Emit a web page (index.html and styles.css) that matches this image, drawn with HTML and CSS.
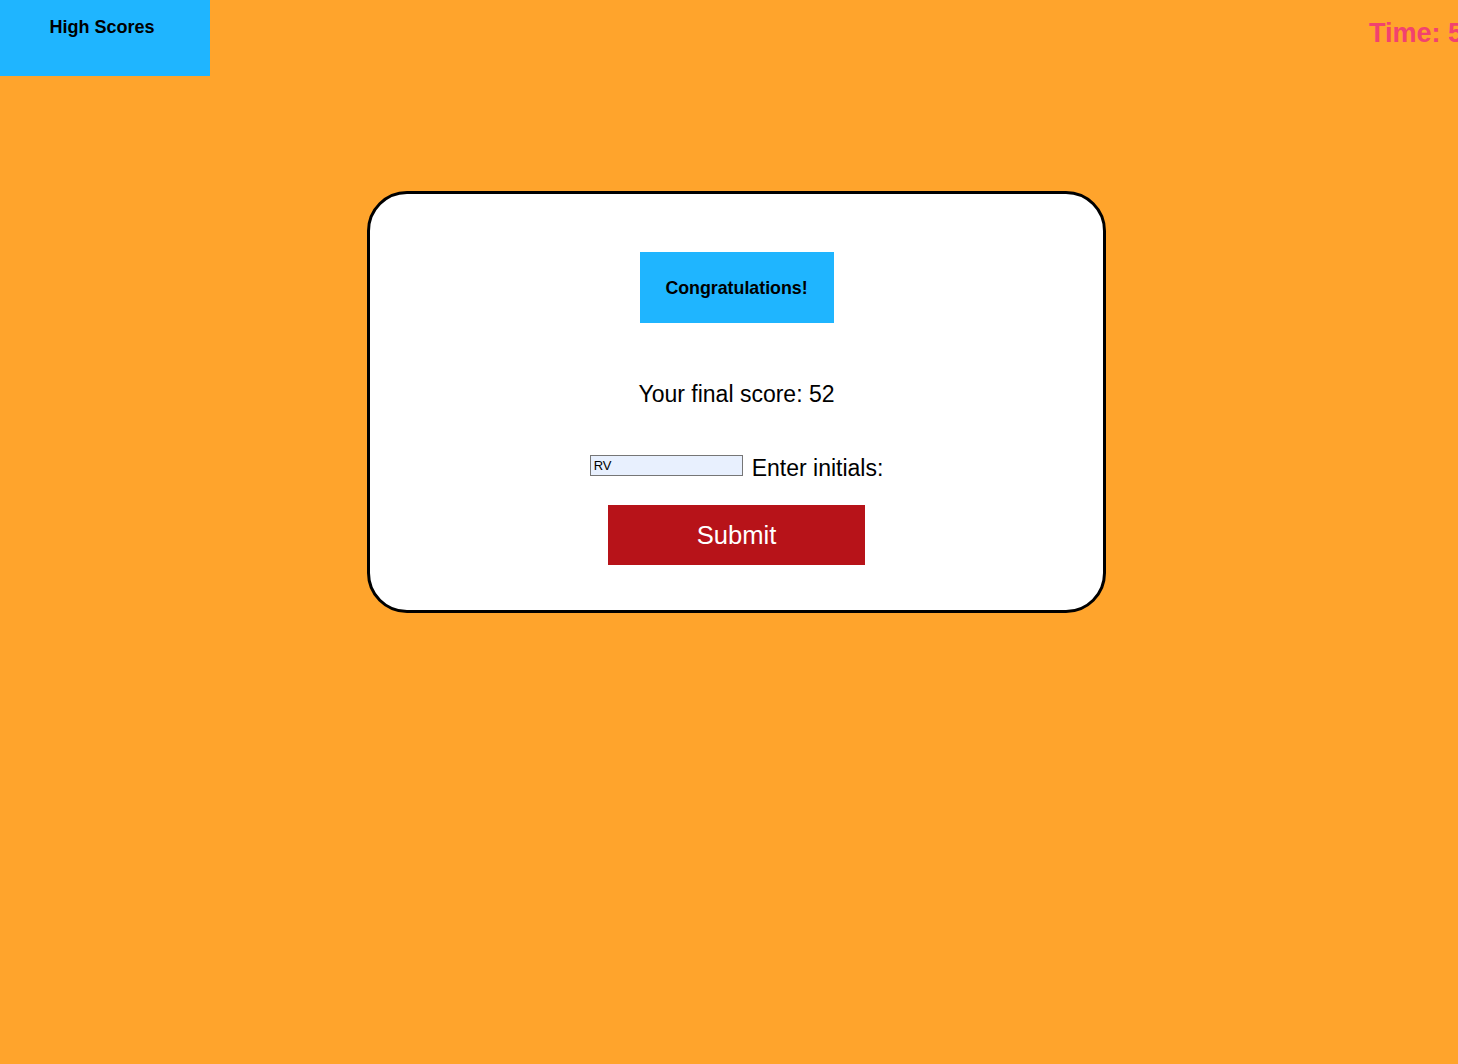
FILE: index.html
```html
<!DOCTYPE html>
<html lang="en">
<head>
<meta charset="utf-8">
<title>Quiz - Final Score</title>
<link rel="stylesheet" href="styles.css">
</head>
<body>
  <header class="topbar">
    <div class="high-scores">High Scores</div>
    <div class="timer">Time: 50</div>
  </header>
  <main class="stage">
    <section class="card">
      <div class="congrats">Congratulations!</div>
      <p class="score">Your final score: 52</p>
      <div class="entry">
        <input class="initials" type="text" value="RV">
        <label class="entry-label">Enter initials:</label>
      </div>
      <button class="submit" type="button">Submit</button>
    </section>
  </main>
</body>
</html>
```

FILE: styles.css
```css
html, body {
  margin: 0;
  padding: 0;
  overflow: hidden;
}

body {
  background: #ffa42c;
  font-family: "Liberation Sans", Arial, Helvetica, sans-serif;
  color: #000;
  width: 1458px;
  height: 1064px;
}

.topbar {
  display: flex;
  justify-content: space-between;
  align-items: flex-start;
  height: 76px;
}

.high-scores {
  width: 210px;
  height: 76px;
  box-sizing: border-box;
  background: #1fb5ff;
  padding: 17px 6px 0 0;
  text-align: center;
  font-weight: bold;
  font-size: 18px;
}

.timer {
  flex: none;
  width: 89px;
  margin-top: 18px;
  white-space: nowrap;
  color: #f2426f;
  font-weight: bold;
  font-size: 27px;
}

.stage {
  padding-left: 15px;
}

.card {
  width: 739px;
  box-sizing: border-box;
  margin: 115px auto 0;
  background: #fff;
  border: 3px solid #000;
  border-radius: 40px;
  padding: 58px 0 45px;
  display: flex;
  flex-direction: column;
  align-items: center;
}

.congrats {
  width: 194px;
  height: 71px;
  box-sizing: border-box;
  padding-top: 2px;
  background: #1fb5ff;
  display: flex;
  align-items: center;
  justify-content: center;
  font-weight: bold;
  font-size: 17.8px;
}

.score {
  margin: 59px 0 0;
  font-size: 23px;
  line-height: 25px;
}

.entry {
  margin-top: 48px;
  display: flex;
  align-items: flex-start;
  gap: 9px;
  font-size: 23px;
  line-height: 25px;
}

.entry-label {
  margin-top: 1px;
}

.initials {
  width: 153px;
  height: 21px;
  box-sizing: border-box;
  margin: 0;
  padding: 1px 3px;
  border: 1px solid #767676;
  background: #e8f0fe;
  font-family: "Liberation Sans", Arial, Helvetica, sans-serif;
  font-size: 13px;
  color: #000;
}

.submit {
  margin-top: 24px;
  width: 257px;
  height: 60px;
  border: none;
  background: #b71319;
  color: #fff;
  font-family: "Liberation Sans", Arial, Helvetica, sans-serif;
  font-size: 25.6px;
  padding: 0;
}
```
